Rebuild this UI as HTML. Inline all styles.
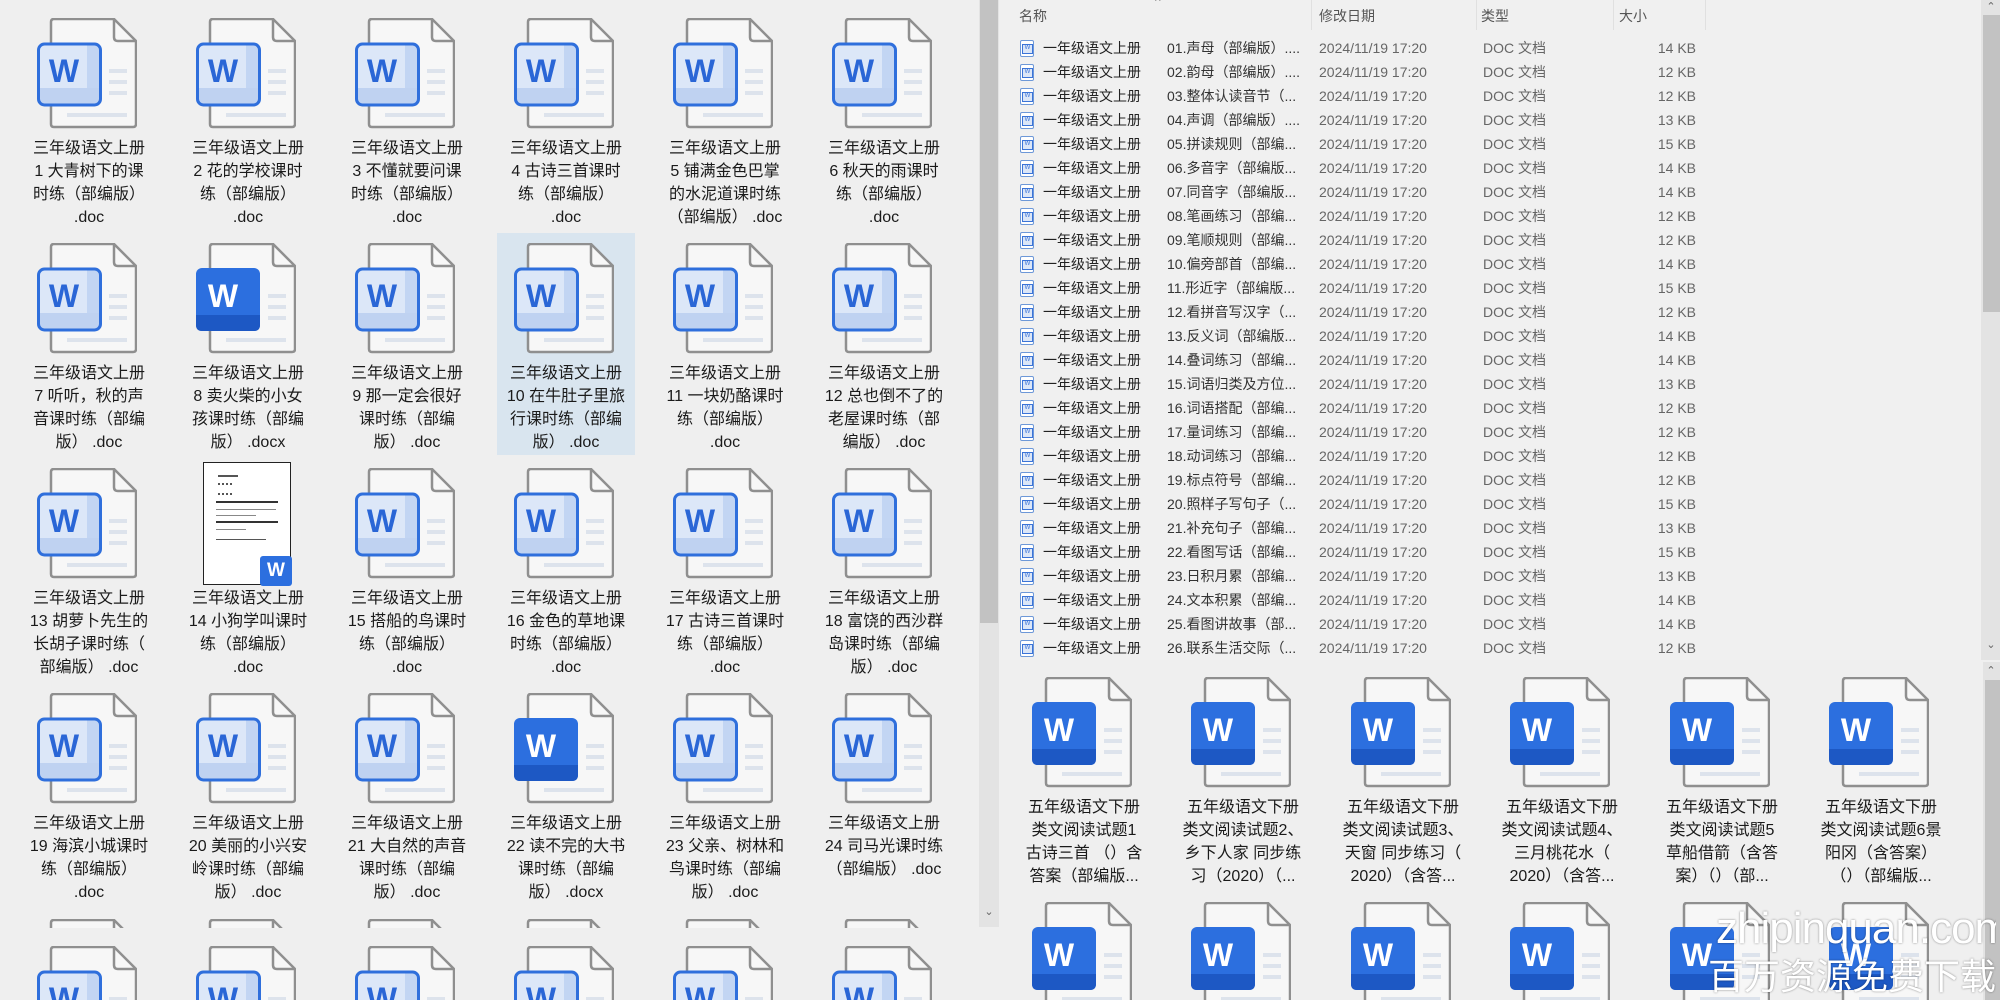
<!DOCTYPE html>
<html><head><meta charset="utf-8">
<style>
*{margin:0;padding:0;box-sizing:border-box}
html,body{width:2000px;height:1000px;overflow:hidden}
body{background:#efefef;font-family:"Liberation Sans","Noto Sans CJK SC",sans-serif;color:#222}
#wrap{position:absolute;left:0;top:0;width:2000px;height:1000px;overflow:hidden;background:#efefef}
.it{position:absolute;width:140px}
.it svg{position:absolute;left:18px;top:0}
.lb{position:absolute;top:119px;left:0;width:140px;text-align:center;font-size:16px;line-height:23px;color:#1a1a1a}
.sel{position:absolute;left:497px;top:233px;width:138px;height:222px;background:#d9e5ef}
.sb{position:absolute;background:#e3e3e3}
.th{position:absolute;background:#c2c2c2}
.ar{position:absolute;font-size:11px;color:#666;width:20px;text-align:center}
.row{position:absolute;left:1000px;height:24px;width:980px;font-size:14px;line-height:24px;white-space:nowrap}
.row span{position:absolute;top:0}
.ic{position:absolute;width:14px;height:17px;border:1.5px solid #6d98d8;border-radius:2px;background:#fff}
.ic:after{content:"W";position:absolute;left:1px;top:3px;width:9px;height:8px;background:#dbe6f7;border:1px solid #3b74d8;font-size:6px;line-height:6px;color:#3b74d8;text-align:center}
.hd{position:absolute;top:6px;font-size:14px;color:#555}
.sep{position:absolute;top:0;width:1px;height:30px;background:#e0e0e0}
.wm{position:absolute;color:#fff;text-shadow:0 0 2px rgba(0,0,0,.45);white-space:nowrap}
</style></head><body>
<div id="wrap">
<svg width="0" height="0" style="position:absolute">
<defs>
<g id="lt">
<path d="M14,4 Q14,1 17,1 H77 L99,23 V106 Q99,109 96,109 H17 Q14,109 14,106 Z" fill="#f7f7f7" stroke="#8f8f8f" stroke-width="2.5"/>
<path d="M77,1 V19 Q77,23 81,23 H99" fill="none" stroke="#8f8f8f" stroke-width="2.5"/>
<rect x="72" y="51" width="18" height="4" fill="#dde3ec"/><rect x="72" y="62" width="18" height="4" fill="#dde3ec"/><rect x="72" y="73" width="18" height="4" fill="#dde3ec"/><rect x="30" y="95" width="60" height="4" fill="#dde3ec"/>
<rect x="1.5" y="26" width="62" height="61" rx="6" fill="#dce7f8"/>
<rect x="50" y="27" width="12" height="59" fill="#c2d5f3"/>
<rect x="2" y="70" width="61" height="16" fill="#bfd2f1"/>
<rect x="1.5" y="26" width="62" height="61" rx="6" fill="none" stroke="#2f6fdc" stroke-width="3"/>
<text x="27" y="64" text-anchor="middle" font-family="Liberation Sans,sans-serif" font-weight="bold" font-size="32" fill="#2a66d6">W</text>
</g>
<g id="sd">
<path d="M14,4 Q14,1 17,1 H77 L99,23 V106 Q99,109 96,109 H17 Q14,109 14,106 Z" fill="#f7f7f7" stroke="#8f8f8f" stroke-width="2.5"/>
<path d="M77,1 V19 Q77,23 81,23 H99" fill="none" stroke="#8f8f8f" stroke-width="2.5"/>
<rect x="72" y="51" width="18" height="4" fill="#dde3ec"/><rect x="72" y="62" width="18" height="4" fill="#dde3ec"/><rect x="72" y="73" width="18" height="4" fill="#dde3ec"/><rect x="30" y="95" width="60" height="4" fill="#dde3ec"/>
<rect x="0" y="25" width="64" height="63" rx="6" fill="#2c6fdf"/>
<path d="M0,72 H64 V82 Q64,88 58,88 H6 Q0,88 0,82 Z" fill="#1d58c4"/>
<text x="27" y="64" text-anchor="middle" font-family="Liberation Sans,sans-serif" font-weight="bold" font-size="32" fill="#fff">W</text>
</g>
</defs></svg>

<div class="sel"></div>

<div class="it" style="left:19px;top:18px"><svg width="100" height="112"><use href="#lt"/></svg><div class="lb">三年级语文上册<br>1 大青树下的课<br>时练（部编版）<br>.doc</div></div>
<div class="it" style="left:178px;top:18px"><svg width="100" height="112"><use href="#lt"/></svg><div class="lb">三年级语文上册<br>2 花的学校课时<br>练（部编版）<br>.doc</div></div>
<div class="it" style="left:337px;top:18px"><svg width="100" height="112"><use href="#lt"/></svg><div class="lb">三年级语文上册<br>3 不懂就要问课<br>时练（部编版）<br>.doc</div></div>
<div class="it" style="left:496px;top:18px"><svg width="100" height="112"><use href="#lt"/></svg><div class="lb">三年级语文上册<br>4 古诗三首课时<br>练（部编版）<br>.doc</div></div>
<div class="it" style="left:655px;top:18px"><svg width="100" height="112"><use href="#lt"/></svg><div class="lb">三年级语文上册<br>5 铺满金色巴掌<br>的水泥道课时练<br>（部编版） .doc</div></div>
<div class="it" style="left:814px;top:18px"><svg width="100" height="112"><use href="#lt"/></svg><div class="lb">三年级语文上册<br>6 秋天的雨课时<br>练（部编版）<br>.doc</div></div>

<div class="it" style="left:19px;top:243px"><svg width="100" height="112"><use href="#lt"/></svg><div class="lb">三年级语文上册<br>7 听听，秋的声<br>音课时练（部编<br>版） .doc</div></div>
<div class="it" style="left:178px;top:243px"><svg width="100" height="112"><use href="#sd"/></svg><div class="lb">三年级语文上册<br>8 卖火柴的小女<br>孩课时练（部编<br>版） .docx</div></div>
<div class="it" style="left:337px;top:243px"><svg width="100" height="112"><use href="#lt"/></svg><div class="lb">三年级语文上册<br>9 那一定会很好<br>课时练（部编<br>版） .doc</div></div>
<div class="it" style="left:496px;top:243px"><svg width="100" height="112"><use href="#lt"/></svg><div class="lb">三年级语文上册<br>10 在牛肚子里旅<br>行课时练（部编<br>版） .doc</div></div>
<div class="it" style="left:655px;top:243px"><svg width="100" height="112"><use href="#lt"/></svg><div class="lb">三年级语文上册<br>11 一块奶酪课时<br>练（部编版）<br>.doc</div></div>
<div class="it" style="left:814px;top:243px"><svg width="100" height="112"><use href="#lt"/></svg><div class="lb">三年级语文上册<br>12 总也倒不了的<br>老屋课时练（部<br>编版） .doc</div></div>

<div class="it" style="left:19px;top:468px"><svg width="100" height="112"><use href="#lt"/></svg><div class="lb">三年级语文上册<br>13 胡萝卜先生的<br>长胡子课时练（<br>部编版） .doc</div></div>
<div class="it" style="left:178px;top:468px">
 <div style="position:absolute;left:25px;top:-6px;width:88px;height:123px;background:#fff;border:1.5px solid #222">
  <div style="position:absolute;left:14px;top:12px;width:20px;height:2px;background:#555"></div>
  <div style="position:absolute;left:14px;top:20px;width:14px;height:12px;border-top:2px dotted #555;border-bottom:2px dotted #555"></div>
  <div style="position:absolute;left:12px;top:38px;width:62px;height:1.5px;background:#333"></div>
  <div style="position:absolute;left:12px;top:46px;width:60px;height:1px;background:#888"></div>
  <div style="position:absolute;left:12px;top:52px;width:40px;height:1px;background:#888"></div>
  <div style="position:absolute;left:12px;top:58px;width:62px;height:1.5px;background:#333"></div>
  <div style="position:absolute;left:12px;top:66px;width:30px;height:1px;background:#888"></div>
  <div style="position:absolute;left:12px;top:76px;width:50px;height:1px;background:#555"></div>
 </div>
 <div style="position:absolute;left:82px;top:88px;width:32px;height:30px;background:#2c6fdf;border-radius:3px;color:#fff;font-weight:bold;font-size:19px;text-align:center;line-height:30px">W</div>
 <div class="lb">三年级语文上册<br>14 小狗学叫课时<br>练（部编版）<br>.doc</div></div>
<div class="it" style="left:337px;top:468px"><svg width="100" height="112"><use href="#lt"/></svg><div class="lb">三年级语文上册<br>15 搭船的鸟课时<br>练（部编版）<br>.doc</div></div>
<div class="it" style="left:496px;top:468px"><svg width="100" height="112"><use href="#lt"/></svg><div class="lb">三年级语文上册<br>16 金色的草地课<br>时练（部编版）<br>.doc</div></div>
<div class="it" style="left:655px;top:468px"><svg width="100" height="112"><use href="#lt"/></svg><div class="lb">三年级语文上册<br>17 古诗三首课时<br>练（部编版）<br>.doc</div></div>
<div class="it" style="left:814px;top:468px"><svg width="100" height="112"><use href="#lt"/></svg><div class="lb">三年级语文上册<br>18 富饶的西沙群<br>岛课时练（部编<br>版） .doc</div></div>

<div class="it" style="left:19px;top:693px"><svg width="100" height="112"><use href="#lt"/></svg><div class="lb">三年级语文上册<br>19 海滨小城课时<br>练（部编版）<br>.doc</div></div>
<div class="it" style="left:178px;top:693px"><svg width="100" height="112"><use href="#lt"/></svg><div class="lb">三年级语文上册<br>20 美丽的小兴安<br>岭课时练（部编<br>版） .doc</div></div>
<div class="it" style="left:337px;top:693px"><svg width="100" height="112"><use href="#lt"/></svg><div class="lb">三年级语文上册<br>21 大自然的声音<br>课时练（部编<br>版） .doc</div></div>
<div class="it" style="left:496px;top:693px"><svg width="100" height="112"><use href="#sd"/></svg><div class="lb">三年级语文上册<br>22 读不完的大书<br>课时练（部编<br>版） .docx</div></div>
<div class="it" style="left:655px;top:693px"><svg width="100" height="112"><use href="#lt"/></svg><div class="lb">三年级语文上册<br>23 父亲、树林和<br>鸟课时练（部编<br>版） .doc</div></div>
<div class="it" style="left:814px;top:693px"><svg width="100" height="112"><use href="#lt"/></svg><div class="lb">三年级语文上册<br>24 司马光课时练<br>（部编版） .doc</div></div>

<div style="position:absolute;left:0;top:919px;width:975px;height:9px;overflow:hidden">
<svg style="position:absolute;left:37px;top:0" width="100" height="9" viewBox="0 0 100 9"><use href="#lt"/></svg>
<svg style="position:absolute;left:196px;top:0" width="100" height="9" viewBox="0 0 100 9"><use href="#lt"/></svg>
<svg style="position:absolute;left:355px;top:0" width="100" height="9" viewBox="0 0 100 9"><use href="#lt"/></svg>
<svg style="position:absolute;left:514px;top:0" width="100" height="9" viewBox="0 0 100 9"><use href="#lt"/></svg>
<svg style="position:absolute;left:673px;top:0" width="100" height="9" viewBox="0 0 100 9"><use href="#lt"/></svg>
<svg style="position:absolute;left:832px;top:0" width="100" height="9" viewBox="0 0 100 9"><use href="#lt"/></svg>
</div>
<svg style="position:absolute;left:37px;top:946px" width="100" height="54" viewBox="0 0 100 54"><use href="#lt"/></svg>
<svg style="position:absolute;left:196px;top:946px" width="100" height="54" viewBox="0 0 100 54"><use href="#lt"/></svg>
<svg style="position:absolute;left:355px;top:946px" width="100" height="54" viewBox="0 0 100 54"><use href="#lt"/></svg>
<svg style="position:absolute;left:514px;top:946px" width="100" height="54" viewBox="0 0 100 54"><use href="#lt"/></svg>
<svg style="position:absolute;left:673px;top:946px" width="100" height="54" viewBox="0 0 100 54"><use href="#lt"/></svg>
<svg style="position:absolute;left:832px;top:946px" width="100" height="54" viewBox="0 0 100 54"><use href="#lt"/></svg>

<div class="sb" style="left:979px;top:0;width:20px;height:927px"></div>
<div class="th" style="left:980px;top:0;width:18px;height:623px"></div>
<div class="ar" style="left:979px;top:905px">&#8964;</div>

<div style="position:absolute;left:1000px;top:0;width:981px;height:660px;background:#f0f0f0"></div>
<div class="hd" style="left:1019px">名称</div>
<div class="hd" style="left:1319px">修改日期</div>
<div class="hd" style="left:1481px">类型</div>
<div class="hd" style="left:1619px">大小</div>
<div class="hd" style="left:1155px;top:-6px;font-size:12px;color:#888">^</div>
<div class="sep" style="left:1311px"></div><div class="sep" style="left:1476px"></div><div class="sep" style="left:1613px"></div><div class="sep" style="left:1705px"></div>

<div class="row" style="top:36px"><div class="ic" style="left:20px;top:4px"></div><span style="left:43px;color:#222">一年级语文上册</span><span style="left:167px;color:#333">01.声母（部编版）....</span><span style="left:319px;color:#666">2024/11/19 17:20</span><span style="left:483px;color:#666">DOC 文档</span><span style="right:284px;color:#666">14 KB</span></div>
<div class="row" style="top:60px"><div class="ic" style="left:20px;top:4px"></div><span style="left:43px;color:#222">一年级语文上册</span><span style="left:167px;color:#333">02.韵母（部编版）....</span><span style="left:319px;color:#666">2024/11/19 17:20</span><span style="left:483px;color:#666">DOC 文档</span><span style="right:284px;color:#666">12 KB</span></div>
<div class="row" style="top:84px"><div class="ic" style="left:20px;top:4px"></div><span style="left:43px;color:#222">一年级语文上册</span><span style="left:167px;color:#333">03.整体认读音节（...</span><span style="left:319px;color:#666">2024/11/19 17:20</span><span style="left:483px;color:#666">DOC 文档</span><span style="right:284px;color:#666">12 KB</span></div>
<div class="row" style="top:108px"><div class="ic" style="left:20px;top:4px"></div><span style="left:43px;color:#222">一年级语文上册</span><span style="left:167px;color:#333">04.声调（部编版）....</span><span style="left:319px;color:#666">2024/11/19 17:20</span><span style="left:483px;color:#666">DOC 文档</span><span style="right:284px;color:#666">13 KB</span></div>
<div class="row" style="top:132px"><div class="ic" style="left:20px;top:4px"></div><span style="left:43px;color:#222">一年级语文上册</span><span style="left:167px;color:#333">05.拼读规则（部编...</span><span style="left:319px;color:#666">2024/11/19 17:20</span><span style="left:483px;color:#666">DOC 文档</span><span style="right:284px;color:#666">15 KB</span></div>
<div class="row" style="top:156px"><div class="ic" style="left:20px;top:4px"></div><span style="left:43px;color:#222">一年级语文上册</span><span style="left:167px;color:#333">06.多音字（部编版...</span><span style="left:319px;color:#666">2024/11/19 17:20</span><span style="left:483px;color:#666">DOC 文档</span><span style="right:284px;color:#666">14 KB</span></div>
<div class="row" style="top:180px"><div class="ic" style="left:20px;top:4px"></div><span style="left:43px;color:#222">一年级语文上册</span><span style="left:167px;color:#333">07.同音字（部编版...</span><span style="left:319px;color:#666">2024/11/19 17:20</span><span style="left:483px;color:#666">DOC 文档</span><span style="right:284px;color:#666">14 KB</span></div>
<div class="row" style="top:204px"><div class="ic" style="left:20px;top:4px"></div><span style="left:43px;color:#222">一年级语文上册</span><span style="left:167px;color:#333">08.笔画练习（部编...</span><span style="left:319px;color:#666">2024/11/19 17:20</span><span style="left:483px;color:#666">DOC 文档</span><span style="right:284px;color:#666">12 KB</span></div>
<div class="row" style="top:228px"><div class="ic" style="left:20px;top:4px"></div><span style="left:43px;color:#222">一年级语文上册</span><span style="left:167px;color:#333">09.笔顺规则（部编...</span><span style="left:319px;color:#666">2024/11/19 17:20</span><span style="left:483px;color:#666">DOC 文档</span><span style="right:284px;color:#666">12 KB</span></div>
<div class="row" style="top:252px"><div class="ic" style="left:20px;top:4px"></div><span style="left:43px;color:#222">一年级语文上册</span><span style="left:167px;color:#333">10.偏旁部首（部编...</span><span style="left:319px;color:#666">2024/11/19 17:20</span><span style="left:483px;color:#666">DOC 文档</span><span style="right:284px;color:#666">14 KB</span></div>
<div class="row" style="top:276px"><div class="ic" style="left:20px;top:4px"></div><span style="left:43px;color:#222">一年级语文上册</span><span style="left:167px;color:#333">11.形近字（部编版...</span><span style="left:319px;color:#666">2024/11/19 17:20</span><span style="left:483px;color:#666">DOC 文档</span><span style="right:284px;color:#666">15 KB</span></div>
<div class="row" style="top:300px"><div class="ic" style="left:20px;top:4px"></div><span style="left:43px;color:#222">一年级语文上册</span><span style="left:167px;color:#333">12.看拼音写汉字（...</span><span style="left:319px;color:#666">2024/11/19 17:20</span><span style="left:483px;color:#666">DOC 文档</span><span style="right:284px;color:#666">12 KB</span></div>
<div class="row" style="top:324px"><div class="ic" style="left:20px;top:4px"></div><span style="left:43px;color:#222">一年级语文上册</span><span style="left:167px;color:#333">13.反义词（部编版...</span><span style="left:319px;color:#666">2024/11/19 17:20</span><span style="left:483px;color:#666">DOC 文档</span><span style="right:284px;color:#666">14 KB</span></div>
<div class="row" style="top:348px"><div class="ic" style="left:20px;top:4px"></div><span style="left:43px;color:#222">一年级语文上册</span><span style="left:167px;color:#333">14.叠词练习（部编...</span><span style="left:319px;color:#666">2024/11/19 17:20</span><span style="left:483px;color:#666">DOC 文档</span><span style="right:284px;color:#666">14 KB</span></div>
<div class="row" style="top:372px"><div class="ic" style="left:20px;top:4px"></div><span style="left:43px;color:#222">一年级语文上册</span><span style="left:167px;color:#333">15.词语归类及方位...</span><span style="left:319px;color:#666">2024/11/19 17:20</span><span style="left:483px;color:#666">DOC 文档</span><span style="right:284px;color:#666">13 KB</span></div>
<div class="row" style="top:396px"><div class="ic" style="left:20px;top:4px"></div><span style="left:43px;color:#222">一年级语文上册</span><span style="left:167px;color:#333">16.词语搭配（部编...</span><span style="left:319px;color:#666">2024/11/19 17:20</span><span style="left:483px;color:#666">DOC 文档</span><span style="right:284px;color:#666">12 KB</span></div>
<div class="row" style="top:420px"><div class="ic" style="left:20px;top:4px"></div><span style="left:43px;color:#222">一年级语文上册</span><span style="left:167px;color:#333">17.量词练习（部编...</span><span style="left:319px;color:#666">2024/11/19 17:20</span><span style="left:483px;color:#666">DOC 文档</span><span style="right:284px;color:#666">12 KB</span></div>
<div class="row" style="top:444px"><div class="ic" style="left:20px;top:4px"></div><span style="left:43px;color:#222">一年级语文上册</span><span style="left:167px;color:#333">18.动词练习（部编...</span><span style="left:319px;color:#666">2024/11/19 17:20</span><span style="left:483px;color:#666">DOC 文档</span><span style="right:284px;color:#666">12 KB</span></div>
<div class="row" style="top:468px"><div class="ic" style="left:20px;top:4px"></div><span style="left:43px;color:#222">一年级语文上册</span><span style="left:167px;color:#333">19.标点符号（部编...</span><span style="left:319px;color:#666">2024/11/19 17:20</span><span style="left:483px;color:#666">DOC 文档</span><span style="right:284px;color:#666">12 KB</span></div>
<div class="row" style="top:492px"><div class="ic" style="left:20px;top:4px"></div><span style="left:43px;color:#222">一年级语文上册</span><span style="left:167px;color:#333">20.照样子写句子（...</span><span style="left:319px;color:#666">2024/11/19 17:20</span><span style="left:483px;color:#666">DOC 文档</span><span style="right:284px;color:#666">15 KB</span></div>
<div class="row" style="top:516px"><div class="ic" style="left:20px;top:4px"></div><span style="left:43px;color:#222">一年级语文上册</span><span style="left:167px;color:#333">21.补充句子（部编...</span><span style="left:319px;color:#666">2024/11/19 17:20</span><span style="left:483px;color:#666">DOC 文档</span><span style="right:284px;color:#666">13 KB</span></div>
<div class="row" style="top:540px"><div class="ic" style="left:20px;top:4px"></div><span style="left:43px;color:#222">一年级语文上册</span><span style="left:167px;color:#333">22.看图写话（部编...</span><span style="left:319px;color:#666">2024/11/19 17:20</span><span style="left:483px;color:#666">DOC 文档</span><span style="right:284px;color:#666">15 KB</span></div>
<div class="row" style="top:564px"><div class="ic" style="left:20px;top:4px"></div><span style="left:43px;color:#222">一年级语文上册</span><span style="left:167px;color:#333">23.日积月累（部编...</span><span style="left:319px;color:#666">2024/11/19 17:20</span><span style="left:483px;color:#666">DOC 文档</span><span style="right:284px;color:#666">13 KB</span></div>
<div class="row" style="top:588px"><div class="ic" style="left:20px;top:4px"></div><span style="left:43px;color:#222">一年级语文上册</span><span style="left:167px;color:#333">24.文本积累（部编...</span><span style="left:319px;color:#666">2024/11/19 17:20</span><span style="left:483px;color:#666">DOC 文档</span><span style="right:284px;color:#666">14 KB</span></div>
<div class="row" style="top:612px"><div class="ic" style="left:20px;top:4px"></div><span style="left:43px;color:#222">一年级语文上册</span><span style="left:167px;color:#333">25.看图讲故事（部...</span><span style="left:319px;color:#666">2024/11/19 17:20</span><span style="left:483px;color:#666">DOC 文档</span><span style="right:284px;color:#666">14 KB</span></div>
<div class="row" style="top:636px"><div class="ic" style="left:20px;top:4px"></div><span style="left:43px;color:#222">一年级语文上册</span><span style="left:167px;color:#333">26.联系生活交际（...</span><span style="left:319px;color:#666">2024/11/19 17:20</span><span style="left:483px;color:#666">DOC 文档</span><span style="right:284px;color:#666">12 KB</span></div>

<div class="sb" style="left:1981px;top:0;width:19px;height:660px"></div>
<div class="th" style="left:1983px;top:15px;width:17px;height:297px"></div>
<div class="ar" style="left:1981px;top:0px">&#8963;</div>
<div class="ar" style="left:1981px;top:638px">&#8964;</div>
<div class="sb" style="left:1983px;top:662px;width:17px;height:338px"></div>
<div class="ar" style="left:1981px;top:664px">&#8963;</div>
<div class="th" style="left:1985px;top:680px;width:15px;height:320px"></div>

<div class="it" style="left:1014px;top:677px"><svg width="100" height="112"><use href="#sd"/></svg><div class="lb">五年级语文下册<br>类文阅读试题1<br>古诗三首 （）含<br>答案（部编版...</div></div>
<div class="it" style="left:1173px;top:677px"><svg width="100" height="112"><use href="#sd"/></svg><div class="lb">五年级语文下册<br>类文阅读试题2、<br>乡下人家 同步练<br>习（2020）（...</div></div>
<div class="it" style="left:1333px;top:677px"><svg width="100" height="112"><use href="#sd"/></svg><div class="lb">五年级语文下册<br>类文阅读试题3、<br>天窗 同步练习（<br>2020）（含答...</div></div>
<div class="it" style="left:1492px;top:677px"><svg width="100" height="112"><use href="#sd"/></svg><div class="lb">五年级语文下册<br>类文阅读试题4、<br>三月桃花水（<br>2020）（含答...</div></div>
<div class="it" style="left:1652px;top:677px"><svg width="100" height="112"><use href="#sd"/></svg><div class="lb">五年级语文下册<br>类文阅读试题5<br>草船借箭（含答<br>案）（）（部...</div></div>
<div class="it" style="left:1811px;top:677px"><svg width="100" height="112"><use href="#sd"/></svg><div class="lb">五年级语文下册<br>类文阅读试题6景<br>阳冈（含答案）<br>（）（部编版...</div></div>

<svg style="position:absolute;left:1032px;top:902px" width="100" height="98" viewBox="0 0 100 98"><use href="#sd"/></svg>
<svg style="position:absolute;left:1191px;top:902px" width="100" height="98" viewBox="0 0 100 98"><use href="#sd"/></svg>
<svg style="position:absolute;left:1351px;top:902px" width="100" height="98" viewBox="0 0 100 98"><use href="#sd"/></svg>
<svg style="position:absolute;left:1510px;top:902px" width="100" height="98" viewBox="0 0 100 98"><use href="#sd"/></svg>
<svg style="position:absolute;left:1670px;top:902px" width="100" height="98" viewBox="0 0 100 98"><use href="#sd"/></svg>
<svg style="position:absolute;left:1829px;top:902px" width="100" height="98" viewBox="0 0 100 98"><use href="#sd"/></svg>

<div class="wm" style="left:1716px;top:904px;font-size:44px;line-height:50px;letter-spacing:-1px;width:280px;overflow:hidden">zhipinquan.com</div>
<div class="wm" style="left:1708px;top:952px;font-size:36px;font-family:'Noto Sans CJK SC',sans-serif;line-height:44px;height:46px;overflow:hidden">百万资源免费下载</div>
</div>
</body></html>
